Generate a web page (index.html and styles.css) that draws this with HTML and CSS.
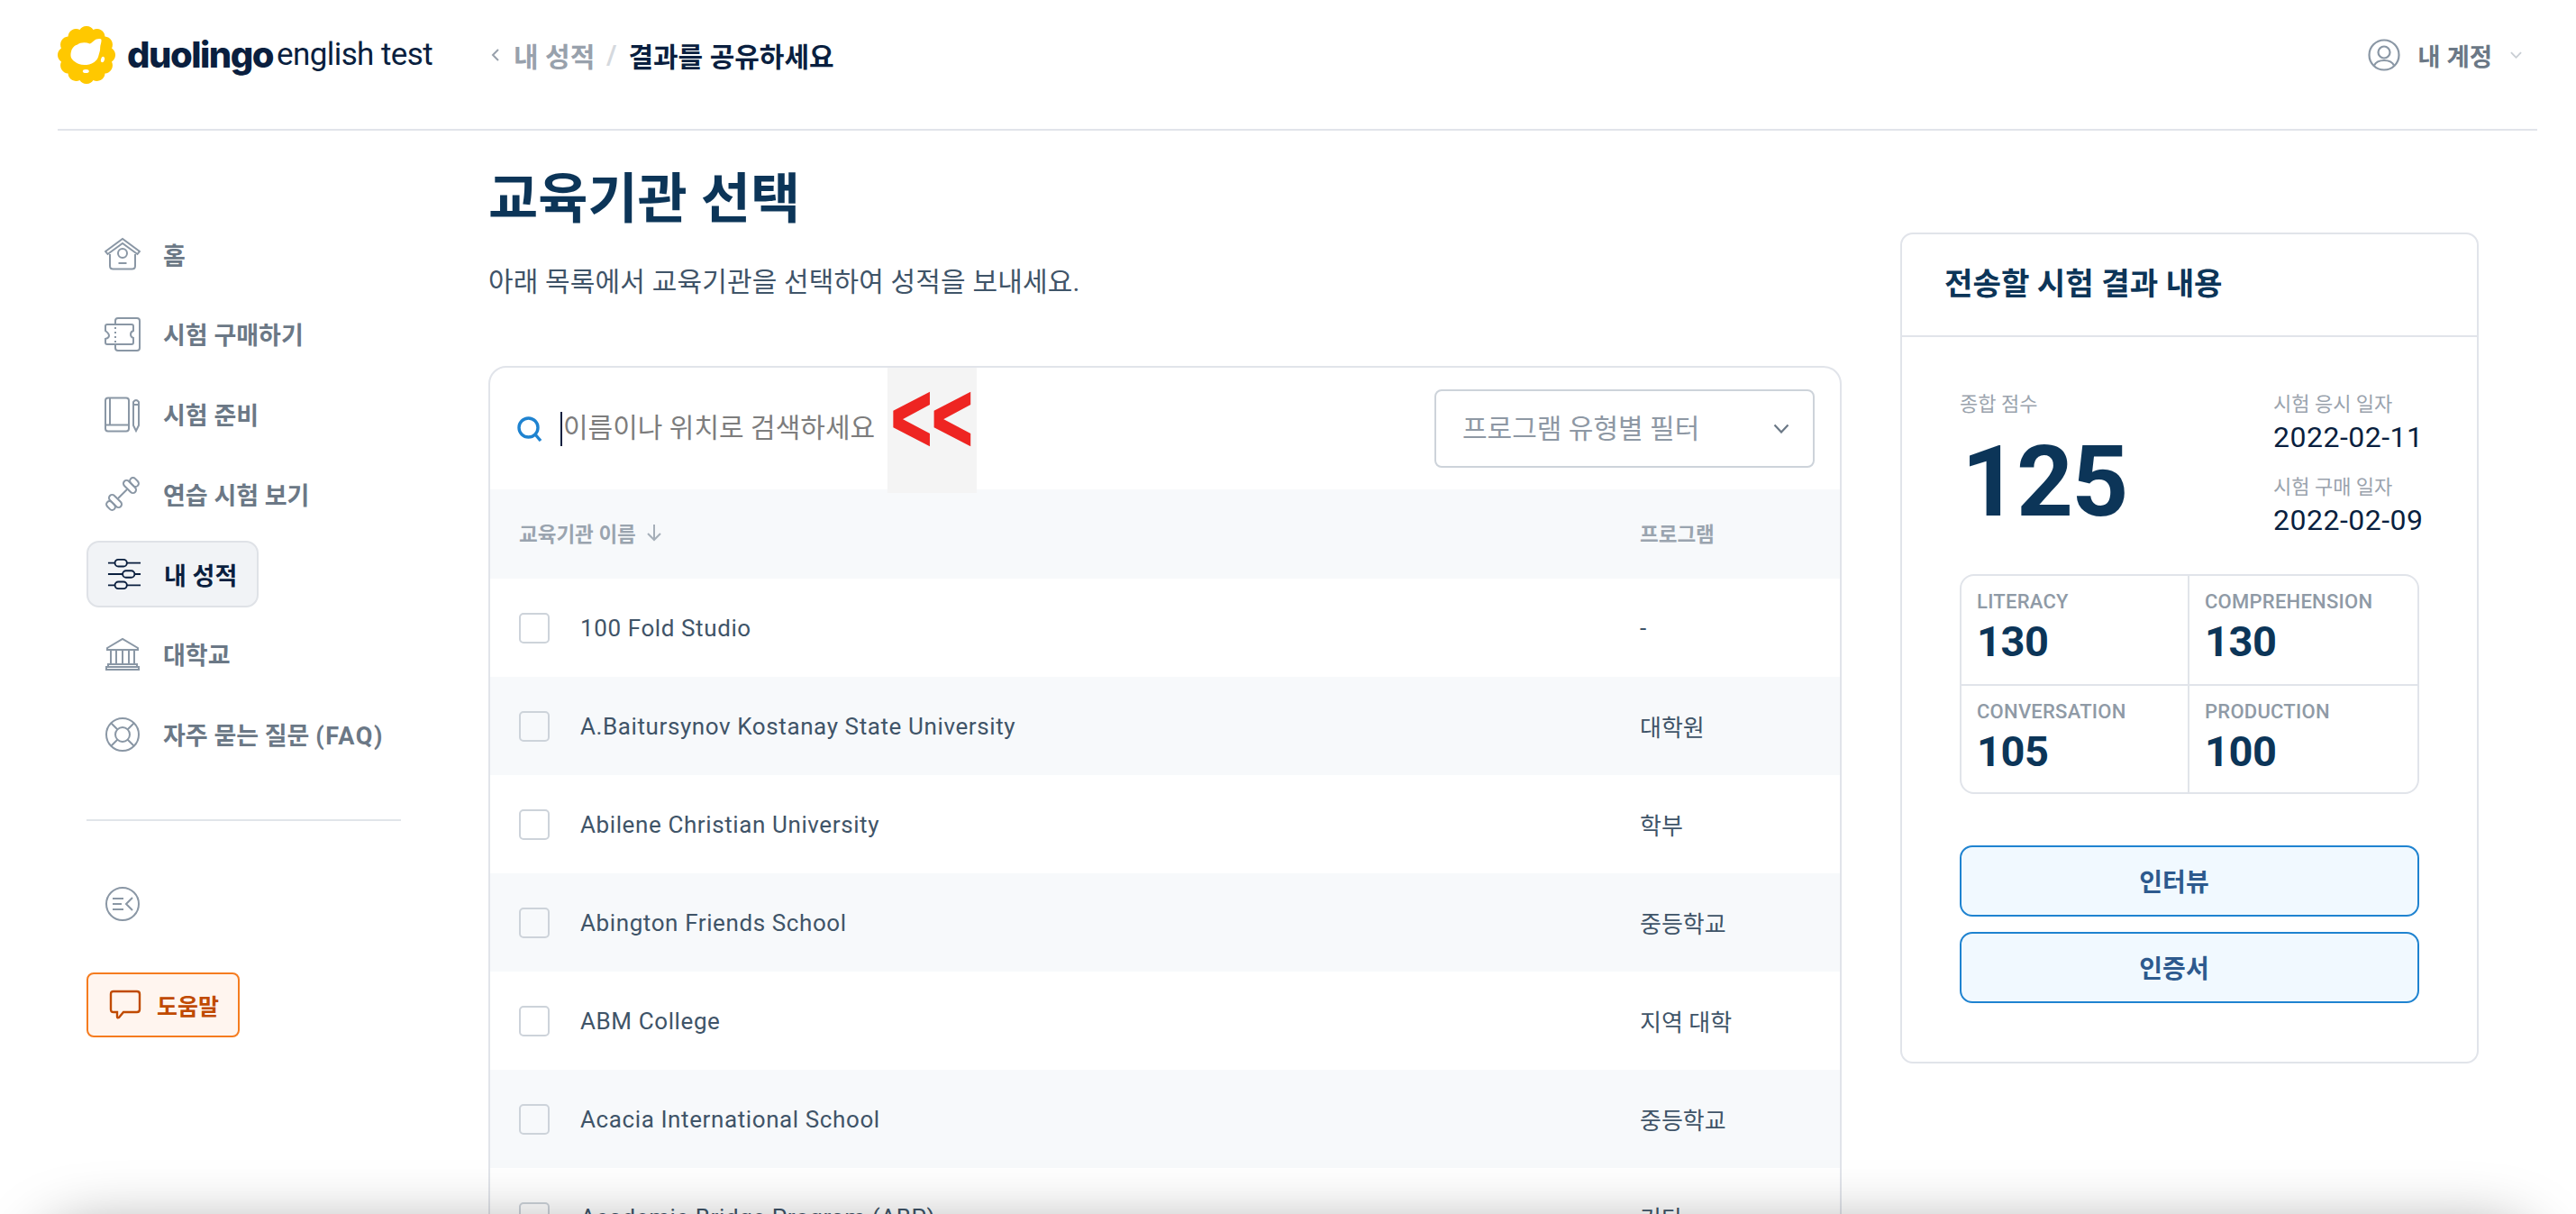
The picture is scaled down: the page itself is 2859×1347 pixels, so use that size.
FILE: index.html
```html
<!DOCTYPE html>
<html lang="ko">
<head>
<meta charset="utf-8">
<title>결과를 공유하세요</title>
<link rel="stylesheet" href="styles.css">
</head>
<body>
<div class="app">
  <header class="topbar">
    <div class="brand">
      <svg class="logo" viewBox="0 0 64 64" aria-hidden="true">
        <path fill="#ffc800" d="M39.5 4A9 9 0 0 1 52.500 11.500A9 9 0 0 1 60 24.500A9 9 0 0 1 60 39.500A9 9 0 0 1 52.500 52.500A9 9 0 0 1 39.500 60A9 9 0 0 1 24.500 60A9 9 0 0 1 11.500 52.500A9 9 0 0 1 4 39.500A9 9 0 0 1 4 24.500A9 9 0 0 1 11.500 11.500A9 9 0 0 1 24.500 4A9 9 0 0 1 39.500 4Z"/>
        <path fill="#fff" d="M15.500 26.300C17 23 19 21.500 22 20.500C25 18 31 17.500 35.500 19.500C38 19 40 15.500 43 14.500C45 13.800 48 13.500 48.500 15C48.800 18 47.200 21 47.200 23.500C47.300 27 46.500 29 45.800 31.300C45 35.500 43.500 38 40.500 40C37 42.500 33 43 29.700 43.100C25 43 21.500 41.500 19.500 39.800C17 38 14.500 36 14.500 33C14.300 30.500 15 28 15.500 26.300Z"/>
        <ellipse cx="50" cy="37" rx="2" ry="3.200" fill="#fff" transform="rotate(15 50 37)"/>
        <ellipse cx="31.300" cy="50" rx="3.500" ry="2" fill="#fff"/>
      </svg>
      <span class="brand-main">duolingo</span>
      <span class="brand-sub">english test</span>
    </div>
    <nav class="crumbs">
      <svg class="crumb-back" viewBox="0 0 10 16" aria-hidden="true"><path d="M8 2 2 8l6 6"/></svg>
      <span class="crumb-link">내 성적</span>
      <span class="crumb-sep">/</span>
      <span class="crumb-current">결과를 공유하세요</span>
    </nav>
    <div class="account">
      <svg class="account-icon" viewBox="0 0 36 36" aria-hidden="true">
        <circle cx="18" cy="18" r="16.500"/>
        <circle cx="18" cy="15" r="6.500"/>
        <path d="M7 29.500C9 25.500 13 24 18 24s9 1.500 11 5.500"/>
      </svg>
      <span class="account-name">내 계정</span>
      <svg class="account-caret" viewBox="0 0 14 8" aria-hidden="true"><path d="M1 1l6 6 6-6"/></svg>
    </div>
  </header>

  <div class="layout">
    <aside class="sidebar">
      <ul class="nav">
        <li class="nav-item">
          <svg class="nav-icon" viewBox="0 0 40 40" aria-hidden="true"><path d="M1 17 20 3l19 14-2.500 3L20 8 3.500 20Z"/><path d="M6 20v13q0 3.500 3.500 3.500h21Q34 36.500 34 33V20"/><circle cx="20" cy="19" r="5"/><path d="M15.500 30h9"/></svg>
          <span>홈</span>
        </li>
        <li class="nav-item">
          <svg class="nav-icon" viewBox="0 0 40 40" aria-hidden="true"><path d="M12 9V5q0-3 3-3h21q3 0 3 3v30q0 3-3 3H15q-3 0-3-3v-4"/><path d="M3 9h27q2 0 2 2v5q-3 1-3 4t3 4v5q0 2-2 2H3q-2 0-2-2v-4q4-1 4-3.500T1 16v-5q0-2 2-2Z"/><path d="M12 12v2m0 3v2m0 3v2m0 3v2"/></svg>
          <span>시험 구매하기</span>
        </li>
        <li class="nav-item">
          <svg class="nav-icon" viewBox="0 0 40 40" aria-hidden="true"><path d="M4 1.500h20q3 0 3 3v31q0 3-3 3H4q-3 0-3-3v-31q0-3 3-3Z"/><path d="M6 1.500v30M1 31.500h26"/><path d="M32 6q3-4 6 0v26l-3 6-3-6Z"/><path d="M32 9h6"/></svg>
          <span>시험 준비</span>
        </li>
        <li class="nav-item">
          <svg class="nav-icon" viewBox="0 0 40 40" aria-hidden="true"><rect x="1.500" y="29.500" width="11" height="7" rx="3.500" transform="rotate(45 7 33)"/><rect x="3.500" y="24.500" width="17" height="7" rx="3.500" transform="rotate(45 12 28)"/><rect x="19.500" y="8.500" width="17" height="7" rx="3.500" transform="rotate(45 28 12)"/><rect x="27.500" y="3.500" width="11" height="7" rx="3.500" transform="rotate(45 33 7)"/><path d="m15 25 10-10"/></svg>
          <span>연습 시험 보기</span>
        </li>
        <li class="nav-item active">
          <svg class="nav-icon" viewBox="0 0 40 40" aria-hidden="true"><path d="M1 7h8m14 0h16M1 20h17m14 0h7M1 33h8m14 0h16"/><rect x="9" y="3" width="14" height="8" rx="4"/><rect x="18" y="16" width="14" height="8" rx="4"/><rect x="9" y="29" width="14" height="8" rx="4"/></svg>
          <span>내 성적</span>
        </li>
        <li class="nav-item">
          <svg class="nav-icon" viewBox="0 0 40 40" aria-hidden="true"><path d="M3 13 20 3l17 10v2H3Z"/><path d="M7 15v16m6-16v16m7-16v16m7-16v16m6-16v16"/><path d="M4 31h32v3H4ZM2 34h36v3H2Z"/></svg>
          <span>대학교</span>
        </li>
        <li class="nav-item">
          <svg class="nav-icon" viewBox="0 0 40 40" aria-hidden="true"><circle cx="20" cy="20" r="18"/><circle cx="20" cy="20" r="8"/><path d="m7.500 7.500 7 7m11 11 7 7m0-25-7 7m-11 11-7 7"/></svg>
          <span>자주 묻는 질문 <span class="nav-latin">(FAQ)</span></span>
        </li>
      </ul>
      <hr class="side-rule">
      <svg class="collapse" viewBox="0 0 40 40" aria-hidden="true"><circle cx="20" cy="20" r="18"/><path d="M9 14h12M9 20h10M9 26h12M31 13l-7 7 7 7"/></svg>
      <div class="help">
        <svg class="help-icon" viewBox="0 0 36 34" aria-hidden="true"><path d="M5 2h26q3 0 3 3v17q0 3-3 3H16l-5 6q-2 1-2-1v-5H5q-3 0-3-3V5q0-3 3-3Z"/></svg>
        <span>도움말</span>
      </div>
    </aside>

    <main class="main">
      <h1 class="title">교육기관 선택</h1>
      <p class="subtitle">아래 목록에서 교육기관을 선택하여 성적을 보내세요.</p>
      <section class="card">
        <div class="search-row">
          <svg class="search-icon" viewBox="0 0 28 28" aria-hidden="true"><circle cx="12.500" cy="12.500" r="10.500"/><path d="m20 20 6 7"/></svg>
          <span class="caret"></span>
          <span class="placeholder">이름이나 위치로 검색하세요</span>
          <div class="filter">
            <span class="filter-text">프로그램 유형별 필터</span>
            <svg class="filter-caret" viewBox="0 0 18 11" aria-hidden="true"><path d="m1.500 1.500 7.500 8 7.500-8"/></svg>
          </div>
        </div>
        <div class="mark"><span class="mark-text">&lt;&lt;</span></div>
        <div class="row head">
          <div class="head-name">교육기관 이름
            <svg class="sort" viewBox="0 0 18 20" aria-hidden="true"><path d="M9 1v17M2 11l7 7 7-7"/></svg>
          </div>
          <div class="head-prog">프로그램</div>
        </div>
        <div class="row"><span class="check"></span><span class="name">100 Fold Studio</span><span class="prog">-</span></div>
        <div class="row"><span class="check"></span><span class="name">A.Baitursynov Kostanay State University</span><span class="prog">대학원</span></div>
        <div class="row"><span class="check"></span><span class="name">Abilene Christian University</span><span class="prog">학부</span></div>
        <div class="row"><span class="check"></span><span class="name">Abington Friends School</span><span class="prog">중등학교</span></div>
        <div class="row"><span class="check"></span><span class="name">ABM College</span><span class="prog">지역 대학</span></div>
        <div class="row"><span class="check"></span><span class="name">Acacia International School</span><span class="prog">중등학교</span></div>
        <div class="row"><span class="check"></span><span class="name">Academic Bridge Program (ABP)</span><span class="prog">기타</span></div>
      </section>
    </main>

    <aside class="summary">
      <h2 class="summary-title">전송할 시험 결과 내용</h2>
      <div class="summary-body">
        <div class="overview">
          <div>
            <div class="meta">종합 점수</div>
            <div class="total">125</div>
          </div>
          <div class="dates">
            <div class="meta">시험 응시 일자</div>
            <div class="date">2022-02-11</div>
            <div class="meta meta-gap">시험 구매 일자</div>
            <div class="date">2022-02-09</div>
          </div>
        </div>
        <div class="scores">
          <div class="score"><div class="score-label">LITERACY</div><div class="score-value">130</div></div>
          <div class="score"><div class="score-label">COMPREHENSION</div><div class="score-value">130</div></div>
          <div class="score"><div class="score-label">CONVERSATION</div><div class="score-value">105</div></div>
          <div class="score"><div class="score-label">PRODUCTION</div><div class="score-value">100</div></div>
        </div>
        <div class="action">인터뷰</div>
        <div class="action">인증서</div>
      </div>
    </aside>
  </div>
  <div class="edge-shadow"></div>
</div>
</body>
</html>
```
FILE: styles.css
```css
* { box-sizing: border-box; }
html, body { margin: 0; padding: 0; background: #fff; }
body {
  font-family: Roboto, "Noto Sans CJK KR", sans-serif;
  font-stretch: 90%;
  color: #0a1f3f;
}
.app { position: relative; width: 2859px; height: 1347px; overflow: hidden; }

/* top bar */
.topbar {
  display: flex; align-items: center;
  height: 145px; margin: 0 43px 0 64px; padding-bottom: 22px;
  border-bottom: 2px solid #e1e4ea;
}
.brand { display: flex; align-items: center; width: 481px; }
.logo { width: 64px; height: 64px; margin-right: 13px; flex: none; }
.brand-main { font-family: Inter, sans-serif; font-stretch: 100%; font-weight: 800; font-size: 40px; letter-spacing: -1.500px; color: #0a1f3f; margin-right: 4px; }
.brand-sub { font-size: 35px; font-weight: 400; letter-spacing: -.6px; color: #0a1f3f; }
.crumbs { display: flex; align-items: center; font-size: 30px; font-weight: 700; }
.crumb-back { width: 10px; height: 16px; margin-right: 15px; fill: none; stroke: #98a1ac; stroke-width: 2; }
.crumb-link { color: #98a1ac; }
.crumb-sep { color: #d5d9de; margin: 0 13px; }
.crumb-current { color: #0a1f3f; }
.account { display: flex; align-items: center; margin-left: auto; padding-right: 17px; font-size: 27.500px; font-weight: 700; color: #6b7886; }
.account-icon { width: 36px; height: 36px; margin-right: 19px; fill: none; stroke: #8a97a5; stroke-width: 2.200; }
.account-caret { width: 13px; height: 8px; margin-left: 20px; fill: none; stroke: #c9ced4; stroke-width: 2; }

/* layout */
.layout { display: flex; align-items: flex-start; padding-left: 96px; }

/* sidebar */
.sidebar { width: 349px; margin-right: 97px; padding-top: 100px; flex: none; }
.nav { list-style: none; margin: 0; padding: 0; display: flex; flex-direction: column; gap: 14.750px; }
.nav-item {
  display: flex; align-items: center; gap: 25px;
  width: fit-content; height: 74px; padding: 0 22px 0 20px;
  border: 2px solid transparent; border-radius: 14px; margin-left: -2px;
  font-size: 27px; font-weight: 700; color: #6b7886; white-space: nowrap;
}
.nav-latin { letter-spacing: 1.600px; }
.nav-icon { width: 40px; height: 40px; fill: none; stroke: #8a97a5; stroke-width: 2; flex: none; }
.nav-item.active { background: #f1f3f6; border-color: #dfe2e7; color: #0a1f3f; margin-left: 0; padding-left: 21px; }
.nav-item.active .nav-icon { stroke: #0a1f3f; width: 38px; }
.side-rule { border: 0; border-top: 2px solid #e1e5ea; margin: 57px 0 0; }
.collapse { display: block; width: 40px; height: 40px; margin: 72px 0 0 20px; fill: none; stroke: #8a97a5; stroke-width: 2; }
.help {
  display: flex; align-items: center; gap: 17px;
  width: 170px; height: 72px; margin-top: 56px; padding-left: 23px;
  background: #fff5ef; border: 2px solid #f57c1f; border-radius: 8px;
  font-size: 25px; font-weight: 700; color: #c04a00;
}
.help-icon { width: 36px; height: 34px; fill: none; stroke: #c04a00; stroke-width: 2.400; flex: none; }

/* main */
.main { width: 1502px; margin-right: 65px; flex: none; }
.title { margin: 40px 0 0; font-size: 60px; line-height: 74px; font-weight: 700; color: #0c3558; }
.subtitle { margin: 34px 0 0; font-size: 30px; line-height: 40px; font-weight: 400; letter-spacing: .15px; color: #3f5468; }
.card { position: relative; margin-top: 73px; height: 1000px; border: 2px solid #e1e4ea; border-radius: 20px; overflow: hidden; }
.search-row { display: flex; align-items: center; height: 135px; padding: 0 28px 0 30px; }
.search-icon { width: 28px; height: 28px; margin-right: 20px; fill: none; stroke: #1f83d0; stroke-width: 3.400; flex: none; }
.caret { width: 2px; height: 38px; background: #0a1f3f; margin-right: 1px; }
.placeholder { padding-bottom: 7px; font-size: 30px; font-weight: 400; color: #7d7d7d; }
.filter {
  display: flex; align-items: center; justify-content: space-between;
  width: 422px; height: 87px; margin-left: auto; padding: 0 26px 0 29px;
  border: 2px solid #cdd3da; border-radius: 8px;
  font-size: 30px; font-weight: 400; color: #8e98a4;
}
.filter-text { padding-bottom: 6px; }
.filter-caret { width: 18px; height: 11px; fill: none; stroke: #6b7886; stroke-width: 2.200; }
.mark { position: absolute; left: 441px; top: -2px; width: 99px; height: 141px; background: #f4f4f4; }
.mark-text {
  position: absolute; left: 4px; top: 18px;
  font-family: "Liberation Sans", sans-serif; font-stretch: 100%; font-weight: 700;
  font-size: 88px; line-height: 80px; color: #ee2522; white-space: nowrap;
  -webkit-text-stroke: 2px #ee2522;
  transform: scale(.88, 1.21); transform-origin: left center;
}
.row { display: flex; align-items: center; height: 109px; padding-left: 32px; font-size: 26px; color: #3f5468; }
.row:nth-child(odd) { background: #f7f9fb; }
.row.head { height: 99px; background: #f7f9fb; font-size: 22.500px; font-weight: 700; color: #9aa4af; padding-bottom: 4px; }
.head-name { display: flex; align-items: center; gap: 11px; width: 1244px; }
.sort { width: 18px; height: 20px; fill: none; stroke: #a6afb9; stroke-width: 2; }
.check { width: 34px; height: 34px; border: 2px solid #cdd3da; border-radius: 5px; margin-right: 34px; flex: none; }
.name { width: 1176px; flex: none; letter-spacing: .6px; }
.prog { color: #3f5468; }

/* summary */
.summary { width: 642px; height: 922px; margin-top: 113px; border: 2px solid #e1e4ea; border-radius: 14px; flex: none; }
.summary-title { margin: 0; height: 114px; display: flex; align-items: center; padding: 0 0 8px 47px; border-bottom: 2px solid #e1e4ea; font-size: 34.200px; font-weight: 700; color: #0c3558; }
.summary-body { padding: 62px 64px 0; }
.overview { display: flex; justify-content: space-between; height: 201px; }
.meta { font-size: 22px; line-height: 26px; font-weight: 400; color: #9aa3ad; white-space: nowrap; }
.total { margin: 18px 0 0 2px; font-size: 110px; line-height: 110px; font-weight: 700; letter-spacing: -2px; color: #0c3558; }
.dates { width: 162px; flex: none; }
.date { margin-top: 5px; font-size: 32px; line-height: 36px; letter-spacing: .5px; color: #0a1f3f; white-space: nowrap; }
.meta-gap { margin-top: 25px; }
.scores { display: grid; grid-template-columns: 1fr 1fr; grid-template-rows: 122px 118px; height: 244px; border: 2px solid #e1e4ea; border-radius: 16px; }
.score { padding: 16px 0 0 17px; }
.score:nth-child(odd) { border-right: 2px solid #e1e4ea; }
.score:nth-child(-n+2) { border-bottom: 2px solid #e1e4ea; }
.score-label { font-size: 22px; line-height: 26px; font-weight: 500; letter-spacing: .25px; color: #8f9aa6; }
.score-value { margin-top: 3px; font-size: 47px; line-height: 56px; font-weight: 700; letter-spacing: -.5px; color: #0c3558; }
.action {
  display: flex; align-items: center; justify-content: center;
  height: 79px; margin-top: 17px; padding: 0 34px 2px 0;
  background: #f1f9ff; border: 2px solid #1f83d0; border-radius: 14px;
  font-size: 28px; font-weight: 700; color: #2d5a8e;
}
.scores + .action { margin-top: 57px; }

/* window shadow along the bottom edge */
.edge-shadow { position: absolute; left: 60px; right: 60px; top: 1385px; height: 100px; border-radius: 40px; box-shadow: 0 0 70px 20px rgba(0,0,0,.4); }
```
